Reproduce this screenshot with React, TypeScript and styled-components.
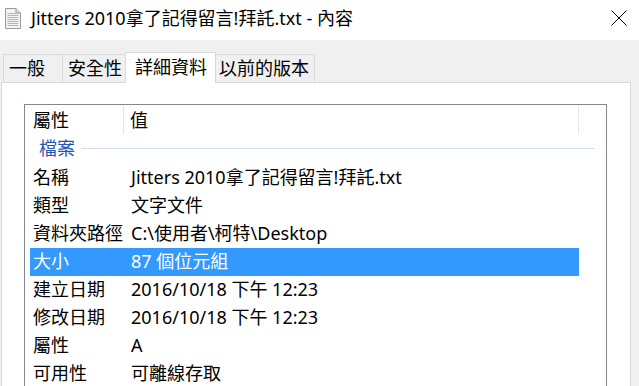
import styled, { createGlobalStyle } from 'styled-components'

const GlobalStyle = createGlobalStyle`
  html, body {
    margin: 0;
    padding: 0;
    background: #f0f0f0;
    overflow: hidden;
  }
  body {
    font-family: "Noto Sans", "Noto Sans CJK TC", "Microsoft JhengHei", sans-serif;
    color: #000;
  }
`

const Window = styled.div`
  width: 639px;
  height: 386px;
  display: flex;
  flex-direction: column;
  background: #f0f0f0;
  overflow: hidden;
`

const TitleBar = styled.div`
  height: 40px;
  flex: none;
  display: flex;
  align-items: center;
  padding: 0 12px 4px 5px;
  box-sizing: border-box;
  background: #fff;
`

const Title = styled.div`
  flex: 1;
  margin-left: 10px;
  font-size: 18px;
  line-height: 24px;
  white-space: nowrap;
`

const Body = styled.div`
  flex: 1;
  display: flex;
  flex-direction: column;
  padding: 12px 8px 0 1px;
  min-height: 0;
`

const TabStrip = styled.div`
  display: flex;
  align-items: flex-end;
  padding-left: 2px;
  height: 30px;
  flex: none;
`

const Tab = styled.div<{ $active?: boolean }>`
  position: relative;
  box-sizing: border-box;
  height: ${p => (p.$active ? '31px' : '28px')};
  min-width: 60px;
  padding: ${p => (p.$active ? '0 8px 0 9px' : '0 5px')};
  margin: ${p => (p.$active ? '0 -2px -1px -3px' : '0 0 0 -1px')};
  border: 1px solid #d9d9d9;
  border-bottom: none;
  background: ${p => (p.$active ? '#fff' : '#f0f0f0')};
  z-index: ${p => (p.$active ? 1 : 0)};
  font-size: 18px;
  line-height: ${p => (p.$active ? '28px' : '26px')};
  white-space: nowrap;

  &:first-child {
    margin-left: 0;
    padding-left: 5px;
  }
`

const Panel = styled.div`
  flex: 1;
  background: #fff;
  border: 1px solid #d9d9d9;
  border-bottom: none;
  padding: 21px 23px 0 22px;
  min-height: 0;
`

const ListBox = styled.div`
  height: 100%;
  border: 1px solid #828790;
  border-bottom: none;
  font-size: 18px;
`

const Header = styled.div`
  display: flex;
  height: 30px;
`

const HeadCell = styled.div<{ $w: number; $pad: number }>`
  box-sizing: border-box;
  width: ${p => p.$w}px;
  margin: 1px 0;
  padding-left: ${p => p.$pad}px;
  border-right: 1px solid #e5e5e5;
  line-height: 28px;
`

const GroupRow = styled.div`
  display: flex;
  align-items: center;
  box-sizing: border-box;
  height: 29px;
  padding: 0 11px 3px 14px;
  line-height: 24px;
  color: #1f56b4;
`

const GroupLine = styled.div`
  flex: 1;
  height: 1px;
  margin-left: 6px;
  background: #d5e0ee;
`

const Rows = styled.div`
  padding-left: 5px;
`

const Row = styled.div<{ $selected?: boolean }>`
  display: grid;
  grid-template-columns: 101px 1fr;
  width: 549px;
  height: 28px;
  line-height: 27px;
  background: ${p => (p.$selected ? '#3399ff' : 'transparent')};
  color: ${p => (p.$selected ? '#fff' : '#000')};
  white-space: nowrap;
`

const Label = styled.span`
  padding-left: 3px;
`

const Value = styled.span``

const FileIcon = () => (
  <svg width='16' height='21' viewBox='0 0 16 21'>
    <path d='M0.5 0.5 H11 L15.5 5 V20.5 H0.5 Z' fill='#f4f4f4' stroke='#9a9a9a' />
    <path d='M11 0.5 V5 H15.5' fill='#e0e0e0' stroke='#9a9a9a' />
    {[5, 7, 9, 11, 13, 15, 17].map(y => (
      <line key={y} x1='2.5' x2='13.5' y1={y + 0.5} y2={y + 0.5} stroke='#b4b4b4' />
    ))}
  </svg>
)

const CloseIcon = () => (
  <svg width='16' height='16' viewBox='0 0 16 16'>
    <path d='M0.5 0.5 L15.5 15.5 M15.5 0.5 L0.5 15.5' stroke='#000' strokeWidth='1' />
  </svg>
)

const rows = [
  ['名稱', 'Jitters 2010拿了記得留言!拜託.txt'],
  ['類型', '文字文件'],
  ['資料夾路徑', 'C:\\使用者\\柯特\\Desktop'],
  ['大小', '87 個位元組'],
  ['建立日期', '2016/10/18 下午 12:23'],
  ['修改日期', '2016/10/18 下午 12:23'],
  ['屬性', 'A'],
  ['可用性', '可離線存取'],
]

export default function App () {
  return (
    <Window>
      <GlobalStyle />
      <TitleBar>
        <FileIcon />
        <Title>Jitters 2010拿了記得留言!拜託.txt - 內容</Title>
        <CloseIcon />
      </TitleBar>
      <Body>
        <TabStrip>
          <Tab>一般</Tab>
          <Tab>安全性</Tab>
          <Tab $active>詳細資料</Tab>
          <Tab>以前的版本</Tab>
        </TabStrip>
        <Panel>
          <ListBox>
            <Header>
              <HeadCell $w={99} $pad={8}>屬性</HeadCell>
              <HeadCell $w={455} $pad={6}>值</HeadCell>
            </Header>
            <GroupRow>
              檔案
              <GroupLine />
            </GroupRow>
            <Rows>
              {rows.map(([k, v], i) => (
                <Row key={k + i} $selected={i === 3}>
                  <Label>{k}</Label>
                  <Value>{v}</Value>
                </Row>
              ))}
            </Rows>
          </ListBox>
        </Panel>
      </Body>
    </Window>
  )
}
